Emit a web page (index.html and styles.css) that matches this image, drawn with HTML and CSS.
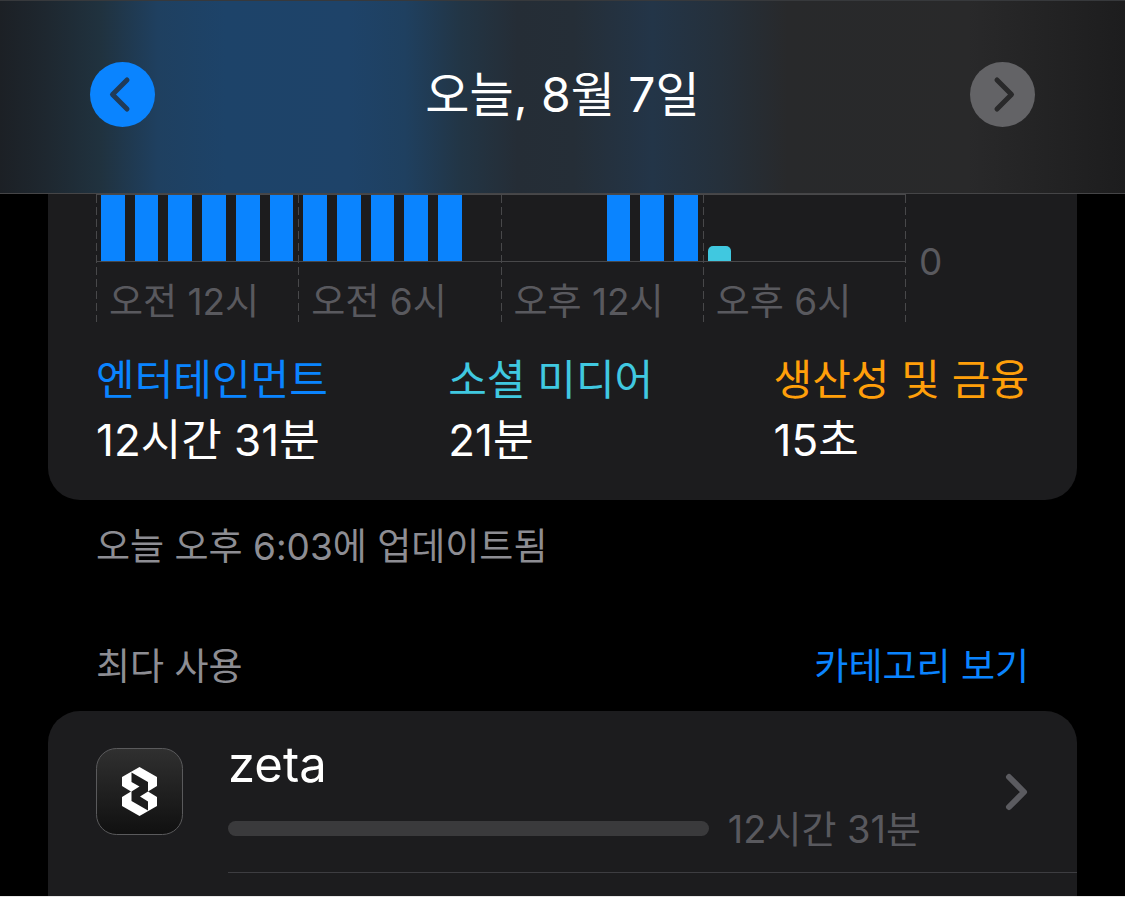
FILE: index.html
```html
<!DOCTYPE html>
<html lang="ko">
<head>
  <meta charset="UTF-8">
  <meta name="viewport" content="width=device-width, initial-scale=1">
  <title>스크린 타임</title>
  <link rel="stylesheet" href="styles.css">
</head>
<body>
  <header class="topbar">
    <button class="day-btn" type="button" aria-label="이전 날">
      <svg viewBox="0 0 65 65"><path d="M37 18 L22.500 32.500 L37 47"/></svg>
    </button>
    <h1>오늘, 8월 7일</h1>
    <button class="day-btn" type="button" aria-label="다음 날" disabled>
      <svg viewBox="0 0 65 65"><path d="M27 18 L41.500 32.500 L27 47"/></svg>
    </button>
  </header>

  <main>
    <section class="card usage">
      <div class="chart">
        <div class="plot">
          <!-- 24시간 막대, 6시간 단위로 묶음 -->
          <div class="quarter">
            <div class="bars">
              <i class="full"></i><i class="full"></i><i class="full"></i><i class="full"></i><i class="full"></i><i class="full"></i>
            </div>
            <span>오전 12시</span>
          </div>
          <div class="quarter">
            <div class="bars">
              <i class="full"></i><i class="full"></i><i class="full"></i><i class="full"></i><i class="full"></i><i></i>
            </div>
            <span>오전 6시</span>
          </div>
          <div class="quarter">
            <div class="bars">
              <i></i><i></i><i></i><i class="full"></i><i class="full"></i><i class="full"></i>
            </div>
            <span>오후 12시</span>
          </div>
          <div class="quarter">
            <div class="bars">
              <i class="social"></i><i></i><i></i><i></i><i></i><i></i>
            </div>
            <span>오후 6시</span>
          </div>
        </div>
        <div class="axis">0</div>
      </div>

      <dl class="legend">
        <div>
          <dt class="blue">엔터테인먼트</dt>
          <dd>12시간 31분</dd>
        </div>
        <div>
          <dt class="teal">소셜 미디어</dt>
          <dd>21분</dd>
        </div>
        <div>
          <dt class="orange">생산성 및 금융</dt>
          <dd>15초</dd>
        </div>
      </dl>
    </section>
    <p class="updated">오늘 오후 6:03에 업데이트됨</p>

    <div class="section-head">
      <h2>최다 사용</h2>
      <a href="#">카테고리 보기</a>
    </div>

    <section class="card apps">
      <a class="app" href="#">
        <svg class="app-icon" viewBox="0 0 87 87">
          <defs>
            <linearGradient id="iconBg" x1="0" y1="0" x2="0" y2="1">
              <stop offset="0" stop-color="#303030"/>
              <stop offset="1" stop-color="#101010"/>
            </linearGradient>
          </defs>
          <rect x="0.5" y="0.5" width="86" height="86" rx="20" fill="url(#iconBg)" stroke="#5a5a5c"/>
          <path fill="#fff" d="M43.500 19 L61 29 V38 L52 43.500 L61 49 V58 L43.500 68 L26 58 V49 L35 43.500 L26 38 V29 Z"/>
          <path fill="#1c1c1c" d="M35.500 24.500 L52 34 V43.500 L44 48.500 L52 53.500 V62.500 L35.500 53 V43.500 L43.500 38.500 L35.500 34 Z"/>
        </svg>
        <div class="app-body">
          <div class="app-info">
            <div class="app-name">zeta</div>
            <div class="app-usage">
              <div class="track"></div>
              <span>12시간 31분</span>
            </div>
          </div>
          <svg class="chevron" viewBox="0 0 24 40"><path d="M4 5 L19 20 L4 35"/></svg>
        </div>
      </a>
    </section>
  </main>
</body>
</html>
```

FILE: styles.css
```css
* {
  box-sizing: border-box;
}
html {
  background: #000;
}
body {
  margin: 0;
  height: 100vh;
  overflow: hidden;
  display: flex;
  flex-direction: column;
  background: #000;
  color: #fff;
  font-family: Inter, "Noto Sans CJK KR", sans-serif;
  border-bottom: 1px solid #e8e8e8;
}
h1, h2, p, dl, dd {
  margin: 0;
  font-weight: 400;
}
a {
  color: inherit;
  text-decoration: none;
}
.topbar {
  flex: none;
  height: 194px;
  padding: 0 90px 5px;
  display: flex;
  align-items: center;
  justify-content: space-between;
  border-top: 1px solid #37393c;
  border-bottom: 1px solid #454547;
  background: linear-gradient(90deg, #1c2025 0%, #1e272f 4%, #20323f 9%, #1f4060 14%, #1d4369 20%, #1e4369 31%, #1f4060 36%, #223545 41%, #252d36 46%, #252e37 51%, #233548 58%, #25303b 64%, #28292b 70%, #29292a 86%, #1d1d1e 100%);
}
h1 {
  font-size: 48px;
  line-height: 60px;
}
.day-btn {
  width: 65px;
  height: 65px;
  padding: 0;
  border: none;
  border-radius: 50%;
  background: #0a84ff;
  cursor: pointer;
}
.day-btn:disabled {
  background: #636366;
}
.day-btn svg {
  display: block;
  fill: none;
  stroke: #203b58;
  stroke-width: 5;
  stroke-linecap: round;
  stroke-linejoin: round;
}
.day-btn:disabled svg {
  stroke: #29292a;
}
main {
  flex: 1;
  min-height: 0;
  padding: 0 48px;
  display: flex;
  flex-direction: column;
}
.card {
  background: #1c1c1e;
  border-radius: 32px;
}

/* 사용 시간 차트 */
.usage {
  padding: 0 48px 30px;
  border-top-left-radius: 0;
  border-top-right-radius: 0;
}
.chart {
  display: flex;
}
.plot {
  flex: 1;
  display: grid;
  grid-template-columns: repeat(4, 1fr);
  padding-right: 1px;
  border-top: 1px solid #48484a;
  background: repeating-linear-gradient(#48484a 0 8px, transparent 8px 12px) right / 1px 100% no-repeat;
}
.quarter {
  height: 127px;
  background: repeating-linear-gradient(#48484a 0 8px, transparent 8px 12px) left / 1px 100% no-repeat;
}
.bars {
  height: 67px;
  display: grid;
  grid-template-columns: repeat(6, 1fr);
  align-items: end;
  border-bottom: 1px solid #48484a;
}
.bars i {
  margin: 0 5px;
}
.bars .full {
  height: 66px;
  background: #0a84ff;
}
.bars .social {
  height: 15px;
  border-radius: 5px 5px 0 0;
  background: #40c8e0;
}
.quarter span {
  display: block;
  padding: 16px 0 0 13px;
  font-size: 37px;
  line-height: 48px;
  color: #59595e;
}
.axis {
  width: 123px;
  padding: 44px 0 0 13px;
  font-size: 37px;
  line-height: 48px;
  color: #59595e;
}
.legend {
  display: flex;
  justify-content: space-between;
  padding-top: 28px;
}
.legend dt {
  font-size: 42px;
  line-height: 60px;
}
.legend dd {
  font-size: 44px;
  line-height: 60px;
}
.blue {
  color: #0a84ff;
}
.teal {
  color: #40c8e0;
}
.orange {
  color: #ff9f0a;
}
.updated {
  padding: 23px 48px 0;
  font-size: 37px;
  line-height: 48px;
  color: #8d8d93;
}

/* 앱 목록 */
.section-head {
  display: flex;
  justify-content: space-between;
  padding: 72px 48px 20px;
  font-size: 37px;
  line-height: 48px;
}
.section-head h2 {
  font-size: 37px;
  color: #8d8d93;
}
.section-head a {
  color: #0a84ff;
}
.apps {
  flex: 1;
  border-bottom-left-radius: 0;
  border-bottom-right-radius: 0;
}
.app {
  display: flex;
  padding-left: 48px;
}
.app-icon {
  flex: none;
  width: 87px;
  height: 87px;
  margin: 37px 45px 0 0;
}
.app-body {
  flex: 1;
  display: flex;
  align-items: center;
  gap: 84px;
  height: 162px;
  padding-right: 48px;
  border-bottom: 1px solid #3d3d41;
}
.app-info {
  flex: 1;
  padding-top: 6px;
}
.app-name {
  font-size: 49px;
  line-height: 68px;
}
.app-usage {
  display: flex;
  align-items: center;
  gap: 19px;
  font-size: 38px;
  line-height: 60px;
  color: #59595e;
}
.track {
  flex: 1;
  height: 15px;
  border-radius: 8px;
  background: #3a3a3c;
}
.chevron {
  width: 24px;
  height: 40px;
  fill: none;
  stroke: #5b5b60;
  stroke-width: 6;
  stroke-linecap: round;
  stroke-linejoin: round;
}
```
